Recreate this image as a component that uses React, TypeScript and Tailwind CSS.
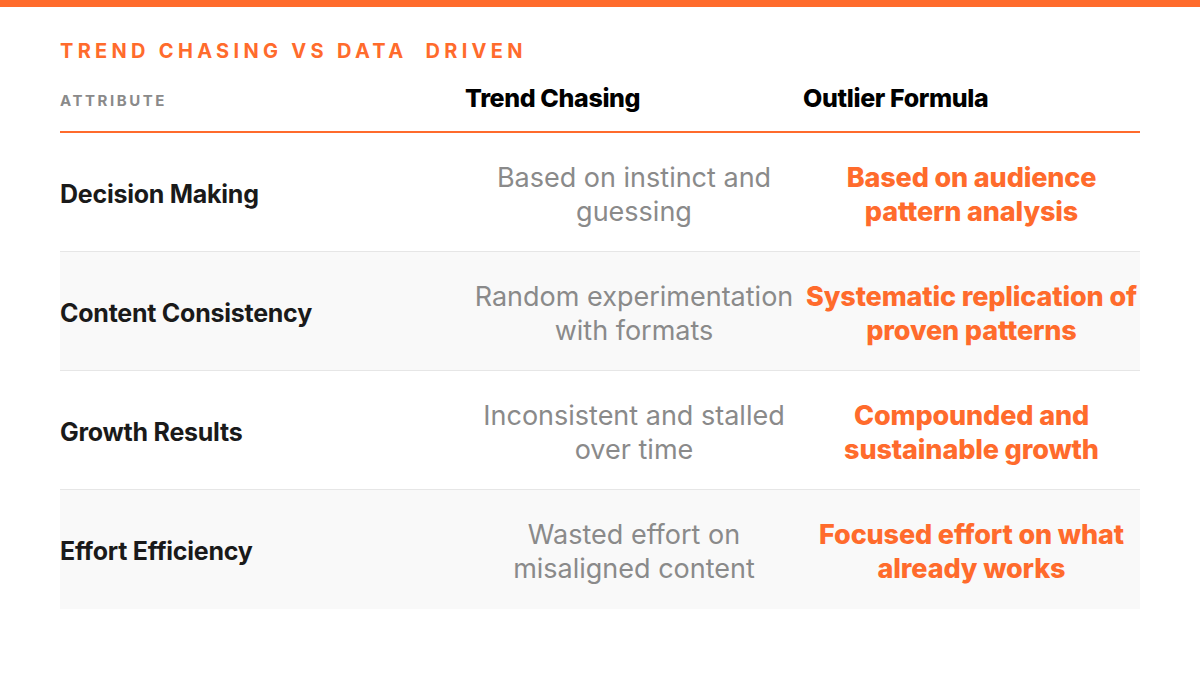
const rows = [
  {
    attribute: "Decision Making",
    trend: ["Based on instinct and", "guessing"],
    outlier: ["Based on audience", "pattern analysis"],
  },
  {
    attribute: "Content Consistency",
    trend: ["Random experimentation", "with formats"],
    outlier: ["Systematic replication of", "proven patterns"],
  },
  {
    attribute: "Growth Results",
    trend: ["Inconsistent and stalled", "over time"],
    outlier: ["Compounded and", "sustainable growth"],
  },
  {
    attribute: "Effort Efficiency",
    trend: ["Wasted effort on", "misaligned content"],
    outlier: ["Focused effort on what", "already works"],
  },
];

export default function App() {
  return (
    <div
      className="h-[675px] w-[1200px] overflow-hidden bg-white"
      style={{ fontFamily: "Inter, 'Noto Sans', sans-serif" }}
    >
      <div className="h-[7px] bg-[#ff6b2c]" />
      <div className="px-[60px]">
        <h1 className="mt-[32px] h-[24px] text-[20px] font-bold leading-[24px] tracking-[0.215em] text-[#ff6b2c] whitespace-pre">
          TREND CHASING VS DATA  DRIVEN
        </h1>

        <div className="grid grid-cols-[405px_338px_337px] items-center border-b-2 border-[#ff6b2c] pt-[20px] pb-[13px]">
          <span className="mt-[2px] text-[15px] font-bold tracking-[0.17em] text-[#8a8a8a]">
            ATTRIBUTE
          </span>
          <span className="-mt-[3px] text-[25px] font-extrabold tracking-[-0.015em] text-black">
            Trend Chasing
          </span>
          <span className="-mt-[3px] text-[25px] font-extrabold tracking-[-0.015em] text-black">
            Outlier Formula
          </span>
        </div>

        {rows.map((row, i) => (
          <div
            key={row.attribute}
            className={`grid h-[119px] grid-cols-[405px_338px_337px] items-center pt-[6px] ${
              i < rows.length - 1 ? "border-b border-[#e6e6e6]" : ""
            } ${i % 2 === 1 ? "bg-[#f9f9f9]" : ""}`}
          >
            <span className="text-[25px] font-bold tracking-[-0.01em] text-[#1a1a1a]">
              {row.attribute}
            </span>
            <p className="whitespace-nowrap text-center text-[27px] leading-[34px] text-[#8a8a8a]">
              {row.trend[0]}
              <br />
              {row.trend[1]}
            </p>
            <p className="whitespace-nowrap text-center text-[27px] font-extrabold leading-[34px] tracking-[-0.005em] text-[#ff6b2c]">
              {row.outlier[0]}
              <br />
              {row.outlier[1]}
            </p>
          </div>
        ))}
      </div>
    </div>
  );
}
